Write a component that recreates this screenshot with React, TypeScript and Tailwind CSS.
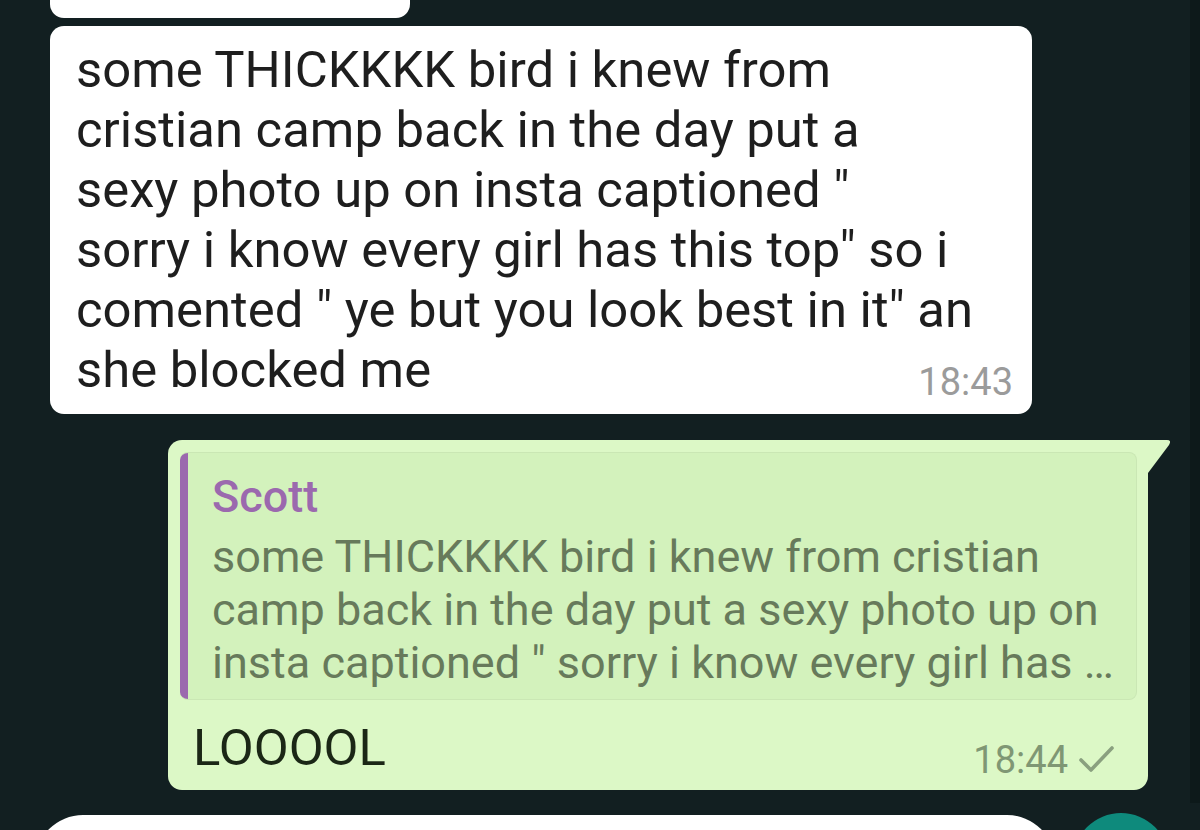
export default function App() {
  return (
    <div className="flex h-[830px] w-[1200px] overflow-hidden bg-[#121f21] font-['Roboto',sans-serif]">
      <div className="flex flex-1 flex-col">
        <div className="ml-[50px] h-[18px] w-[360px] shrink-0 rounded-b-[14px] bg-white" />
        <div className="ml-[50px] mt-[8px] w-[982px] shrink-0 rounded-[14px] bg-white pb-[14px] pl-[26px] pr-[19px] pt-[14px] text-[50.8px] leading-[60px] text-[#1e1e1e]">
          <div>some THICKKKK bird i knew from</div>
          <div>cristian camp back in the day put a</div>
          <div>sexy photo up on insta captioned "</div>
          <div>sorry i know every girl has this top" so i</div>
          <div>comented " ye but you look best in it" an</div>
          <div className="flex items-end justify-between">
            <span>she blocked me</span>
            <span className="text-[38px] leading-[36px] text-[#9b9b9b]">18:43</span>
          </div>
        </div>
        <div className="relative ml-[168px] mt-[26px] w-[980px] shrink-0 rounded-[14px] rounded-tr-none bg-[#dcf8c6] p-[12px] pr-[11px]">
          <svg
            className="absolute left-full top-0"
            width="24"
            height="34"
            viewBox="0 0 24 34"
          >
            <path d="M0 0 H19 Q24 0 21 5 L0 33 Z" fill="#dcf8c6" />
          </svg>
          <div className="flex overflow-hidden rounded-[8px] border-y border-r border-[#cae7b4] bg-[#d3f2bc]">
            <div className="w-[8px] shrink-0 bg-[#9b69ae]" />
            <div className="pb-[10px] pl-[24px] pt-[17px]">
              <div className="text-[45px] font-medium leading-[53px] text-[#9b69ae]">Scott</div>
              <div className="mt-[7px] text-[45px] leading-[53px] text-[#677a5b]">
                <div>some THICKKKK bird i knew from cristian</div>
                <div>camp back in the day put a sexy photo up on</div>
                <div>insta captioned " sorry i know every girl has …</div>
              </div>
            </div>
          </div>
          <div className="mt-[18px] flex items-end justify-between pl-[13px] pr-[22px]">
            <span className="text-[50.8px] leading-[60px] text-[#1b2716]">LOOOOL</span>
            <span className="flex items-center gap-[11px] text-[38px] leading-[36px] text-[#7f9774]">
              18:44
              <svg width="36" height="30" viewBox="0 0 36 30">
                <path
                  d="M2 15 L12 25 L33 3"
                  fill="none"
                  stroke="#8aa07f"
                  strokeWidth="3.6"
                  strokeLinecap="round"
                  strokeLinejoin="round"
                />
              </svg>
            </span>
          </div>
        </div>
        <div className="mt-[23px] flex shrink-0 items-start">
          <div className="ml-[35px] mt-[2px] h-[96px] w-[1020px] shrink-0 rounded-full bg-white" />
          <div className="ml-[18px] h-[96px] w-[96px] shrink-0 rounded-full bg-[#0e8a7c]" />
        </div>
      </div>
      <div className="h-[803px] w-[10px] shrink-0 bg-[#0d191a]" />
    </div>
  );
}
